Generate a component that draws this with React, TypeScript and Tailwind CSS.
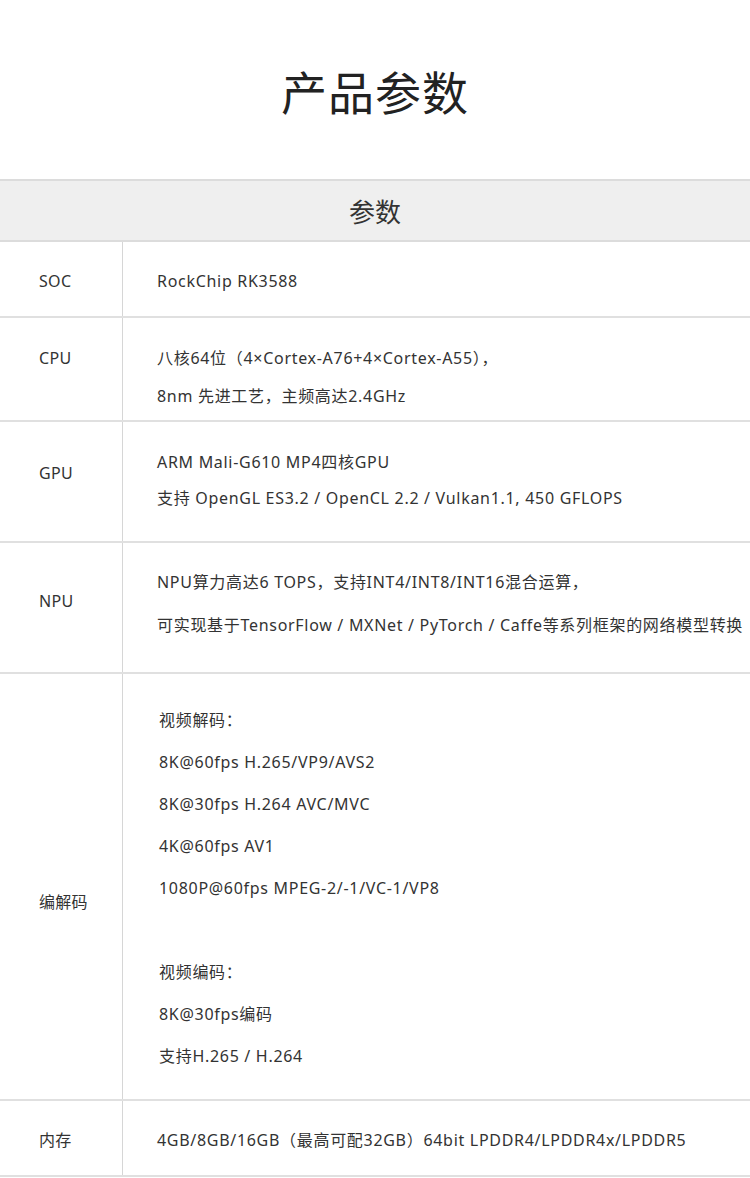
type Spec = {
  label: string;
  height: string;
  labelPad: string;
  textPad: string;
  textIndent: string;
  leading: string;
  lines: string[];
};

const specs: Spec[] = [
  {
    label: "SOC",
    height: "h-[76px]",
    labelPad: "pt-[27px]",
    textPad: "pt-[21px]",
    textIndent: "pl-[34px]",
    leading: "leading-[36px]",
    lines: ["RockChip RK3588"],
  },
  {
    label: "CPU",
    height: "h-[104px]",
    labelPad: "pt-[28px]",
    textPad: "pt-[21px]",
    textIndent: "pl-[34px]",
    leading: "leading-[38px]",
    lines: ["八核64位（4×Cortex-A76+4×Cortex-A55），", "8nm 先进工艺，主频高达2.4GHz"],
  },
  {
    label: "GPU",
    height: "h-[121px]",
    labelPad: "pt-[39px]",
    textPad: "pt-[22px]",
    textIndent: "pl-[34px]",
    leading: "leading-[36px]",
    lines: ["ARM Mali-G610 MP4四核GPU", "支持 OpenGL ES3.2 / OpenCL 2.2 / Vulkan1.1, 450 GFLOPS"],
  },
  {
    label: "NPU",
    height: "h-[131px]",
    labelPad: "pt-[46px]",
    textPad: "pt-[18px]",
    textIndent: "pl-[34px]",
    leading: "leading-[43px]",
    lines: [
      "NPU算力高达6 TOPS，支持INT4/INT8/INT16混合运算，",
      "可实现基于TensorFlow / MXNet / PyTorch / Caffe等系列框架的网络模型转换",
    ],
  },
  {
    label: "编解码",
    height: "h-[427px]",
    labelPad: "pt-[216px]",
    textPad: "pt-[25px]",
    textIndent: "pl-[36px]",
    leading: "leading-[42px]",
    lines: [
      "视频解码：",
      "8K@60fps H.265/VP9/AVS2",
      "8K@30fps H.264 AVC/MVC",
      "4K@60fps AV1",
      "1080P@60fps MPEG-2/-1/VC-1/VP8",
      "",
      "视频编码：",
      "8K@30fps编码",
      "支持H.265 / H.264",
    ],
  },
  {
    label: "内存",
    height: "h-[76px]",
    labelPad: "pt-[27px]",
    textPad: "pt-[21px]",
    textIndent: "pl-[34px]",
    leading: "leading-[36px]",
    lines: ["4GB/8GB/16GB（最高可配32GB）64bit LPDDR4/LPDDR4x/LPDDR5"],
  },
];

export default function App() {
  return (
    <div className="w-[750px] min-h-[1178px] bg-white text-[#333] font-['Noto_Sans','Noto_Sans_CJK_SC',sans-serif]">
      <h1 className="flex h-[179px] items-center justify-center pt-[2px] font-['Noto_Sans_CJK_SC',sans-serif] text-[46px] font-normal tracking-[1px] text-[#222]">
        产品参数
      </h1>

      <div className="flex h-[63px] items-center justify-center border-y-2 border-[#dcdcdc] bg-[#efefef] font-['Noto_Sans_CJK_SC',sans-serif] text-[26px] text-[#333]">
        参数
      </div>

      {specs.map((row) => (
        <div key={row.label} className={`flex border-b-2 border-[#e0e0e0] ${row.height}`}>
          <div className={`w-[123px] shrink-0 border-r border-[#d6d6d6] pl-[39px] text-[16px] leading-[24px] tracking-[0.3px] ${row.labelPad}`}>
            {row.label}
          </div>
          <div className={`flex-1 whitespace-nowrap text-[16px] tracking-[0.7px] ${row.leading} ${row.textPad} ${row.textIndent}`}>
            {row.lines.map((line, i) => (
              <div key={i}>{line || "\u00a0"}</div>
            ))}
          </div>
        </div>
      ))}
    </div>
  );
}
